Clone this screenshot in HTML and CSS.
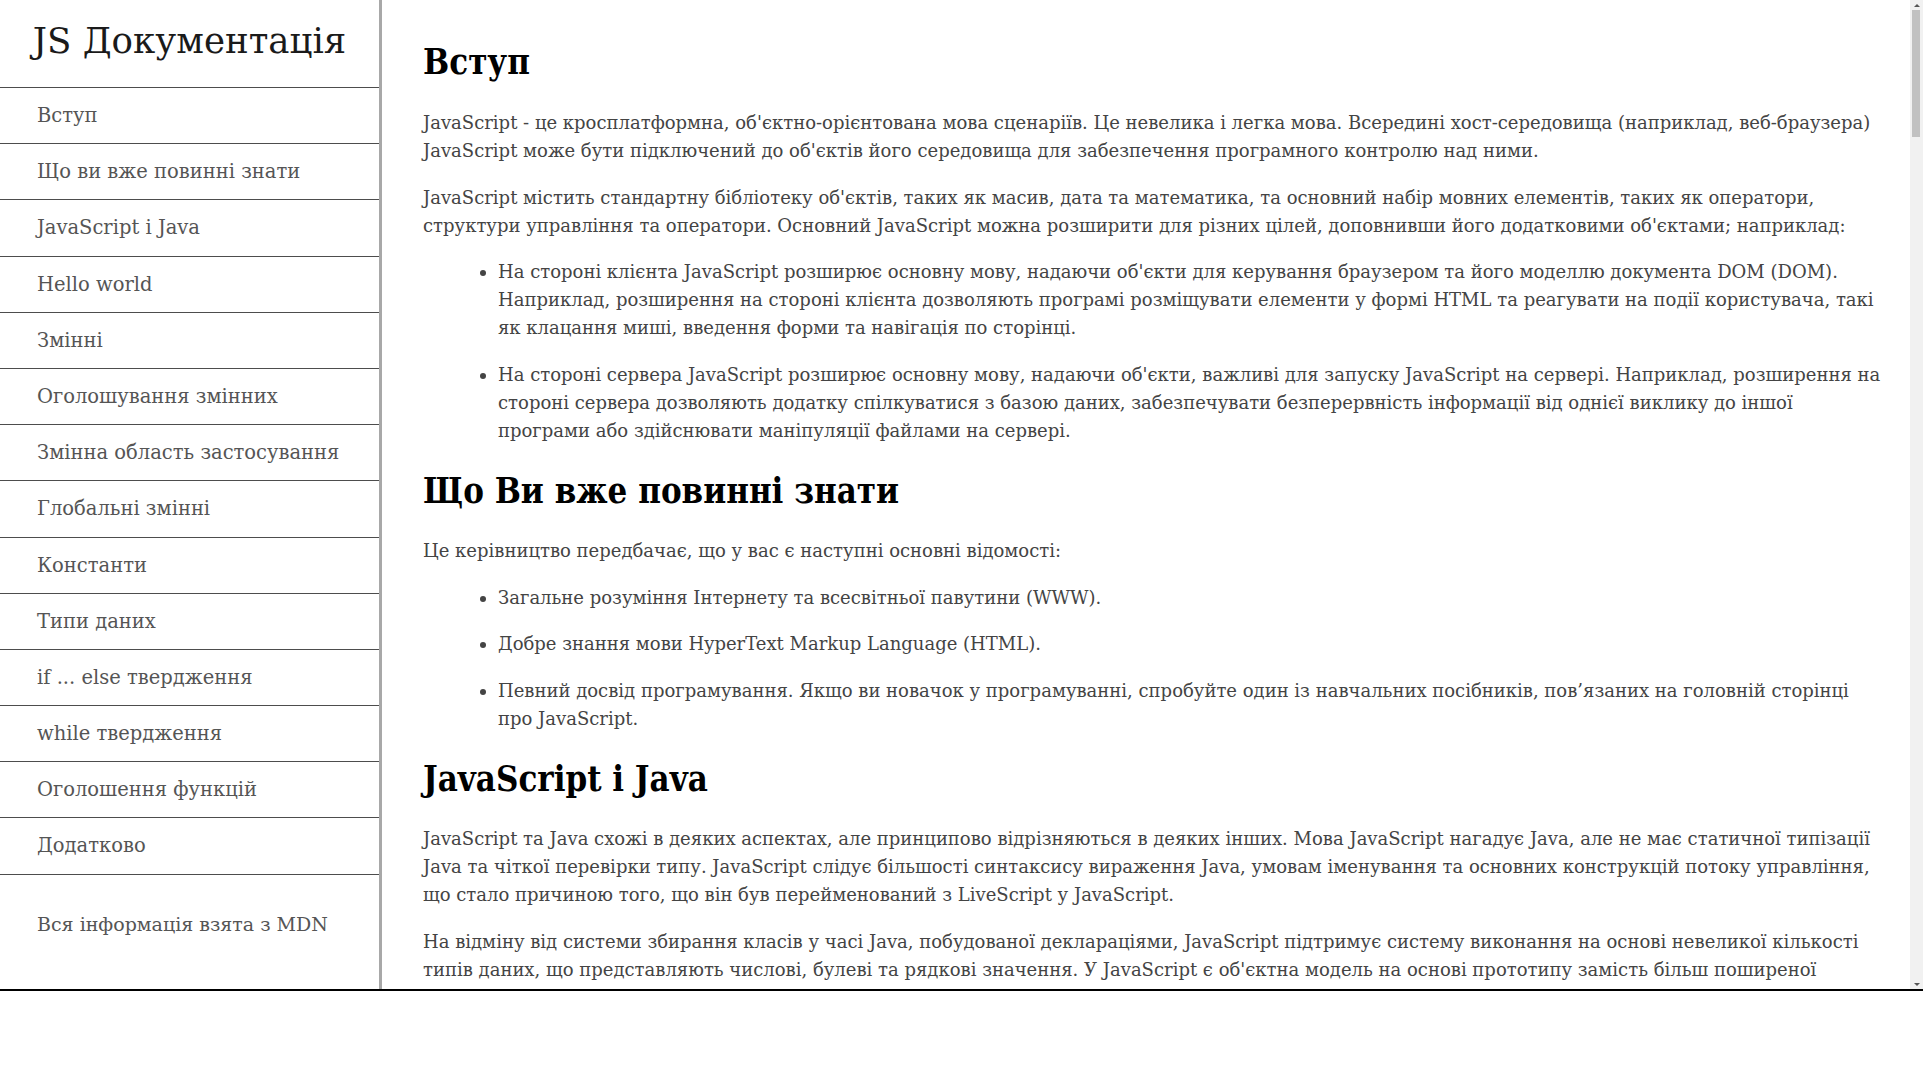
FILE: index.html
```html
<!DOCTYPE html>
<html lang="uk">
<head>
<meta charset="utf-8">
<title>JS Документація</title>
<link rel="stylesheet" href="styles.css">
</head>
<body>
<div class="page">
  <nav class="sidebar" id="navbar">
    <header class="brand">JS Документація</header>
    <ul class="nav-list">
      <li><a class="nav-link" href="#Вступ">Вступ</a></li>
      <li><a class="nav-link" href="#Що_ви_вже_повинні_знати">Що ви вже повинні знати</a></li>
      <li><a class="nav-link" href="#JavaScript_і_Java">JavaScript і Java</a></li>
      <li><a class="nav-link" href="#Hello_world">Hello world</a></li>
      <li><a class="nav-link" href="#Змінні">Змінні</a></li>
      <li><a class="nav-link" href="#Оголошування_змінних">Оголошування змінних</a></li>
      <li><a class="nav-link" href="#Змінна_область">Змінна область застосування</a></li>
      <li><a class="nav-link" href="#Глобальні_змінні">Глобальні змінні</a></li>
      <li><a class="nav-link" href="#Константи">Константи</a></li>
      <li><a class="nav-link" href="#Типи_даних">Типи даних</a></li>
      <li><a class="nav-link" href="#if_else">if ... else твердження</a></li>
      <li><a class="nav-link" href="#while">while твердження</a></li>
      <li><a class="nav-link" href="#Оголошення_функцій">Оголошення функцій</a></li>
      <li><a class="nav-link" href="#Додатково">Додатково</a></li>
    </ul>
    <div class="credit">Вся інформація взята з MDN</div>
  </nav>
  <main class="content" id="main-doc">
    <section class="main-section" id="Вступ">
      <h2 class="sec-title">Вступ</h2>
      <p>JavaScript - це кросплатформна, об'єктно-орієнтована мова сценаріїв. Це невелика і легка мова. Всередині хост-середовища (наприклад, веб-браузера) JavaScript може бути підключений до об'єктів його середовища для забезпечення програмного контролю над ними.</p>
      <p>JavaScript містить стандартну бібліотеку об'єктів, таких як масив, дата та математика, та основний набір мовних елементів, таких як оператори, структури управління та оператори. Основний JavaScript можна розширити для різних цілей, доповнивши його додатковими об'єктами; наприклад:</p>
      <ul class="doc-list">
        <li>На стороні клієнта JavaScript розширює основну мову, надаючи об'єкти для керування браузером та його моделлю документа DOM (DOM). Наприклад, розширення на стороні клієнта дозволяють програмі розміщувати елементи у формі HTML та реагувати на події користувача, такі як клацання миші, введення форми та навігація по сторінці.</li>
        <li>На стороні сервера JavaScript розширює основну мову, надаючи об'єкти, важливі для запуску JavaScript на сервері. Наприклад, розширення на стороні сервера дозволяють додатку спілкуватися з базою даних, забезпечувати безперервність інформації від однієї виклику до іншої програми або здійснювати маніпуляції файлами на сервері.</li>
      </ul>
    </section>
    <section class="main-section" id="Що_ви_вже_повинні_знати">
      <h2 class="sec-title">Що Ви вже повинні знати</h2>
      <p>Це керівництво передбачає, що у вас є наступні основні відомості:</p>
      <ul class="doc-list">
        <li>Загальне розуміння Інтернету та всесвітньої павутини (WWW).</li>
        <li>Добре знання мови HyperText Markup Language (HTML).</li>
        <li>Певний досвід програмування. Якщо ви новачок у програмуванні, спробуйте один із навчальних посібників, пов’язаних на головній сторінці про JavaScript.</li>
      </ul>
    </section>
    <section class="main-section" id="JavaScript_і_Java">
      <h2 class="sec-title">JavaScript і Java</h2>
      <p>JavaScript та Java схожі в деяких аспектах, але принципово відрізняються в деяких інших. Мова JavaScript нагадує Java, але не має статичної типізації Java та чіткої перевірки типу. JavaScript слідує більшості синтаксису вираження Java, умовам іменування та основних конструкцій потоку управління, що стало причиною того, що він був перейменований з LiveScript у JavaScript.</p>
      <p>На відміну від системи збирання класів у часі Java, побудованої деклараціями, JavaScript підтримує систему виконання на основі невеликої кількості типів даних, що представляють числові, булеві та рядкові значення. У JavaScript є об'єктна модель на основі прототипу замість більш поширеної об'єктної моделі на основі класів. Модель на основі прототипу забезпечує динамічне успадкування; тобто те, що успадковується, може відрізнятися для окремих об'єктів.</p>
    </section>
    <section class="main-section" id="Hello_world">
      <h2 class="sec-title">Hello world</h2>
      <p>Щоб почати писати JavaScript, відкрийте Scratchpad і напишіть свій перший JavaScript-код "Hello world".</p>
    </section>
    <section class="main-section" id="Змінні">
      <h2 class="sec-title">Змінні</h2>
      <p>Ви використовуєте змінні як символічні імена для значень у вашій програмі. Назви змінних, які називаються ідентифікаторами, відповідають певним правилам.</p>
    </section>
    <section class="main-section" id="Оголошування_змінних">
      <h2 class="sec-title">Оголошування змінних</h2>
      <p>Ви можете оголосити змінну трьома способами: за допомогою ключового слова var, let або const.</p>
    </section>
    <section class="main-section" id="Змінна_область">
      <h2 class="sec-title">Змінна область застосування</h2>
      <p>Коли ви оголошуєте змінну поза будь-якою функцією, вона називається глобальною змінною, оскільки вона доступна для будь-якого іншого коду в поточному документі.</p>
    </section>
    <section class="main-section" id="Глобальні_змінні">
      <h2 class="sec-title">Глобальні змінні</h2>
      <p>Глобальні змінні насправді є властивостями глобального об'єкта. На веб-сторінках глобальним об'єктом є window.</p>
    </section>
    <section class="main-section" id="Константи">
      <h2 class="sec-title">Константи</h2>
      <p>Ви можете створити іменовану константу тільки для читання за допомогою ключового слова const.</p>
    </section>
    <section class="main-section" id="Типи_даних">
      <h2 class="sec-title">Типи даних</h2>
      <p>Останній стандарт ECMAScript визначає сім типів даних.</p>
    </section>
    <section class="main-section" id="if_else">
      <h2 class="sec-title">if ... else твердження</h2>
      <p>Використовуйте оператор if для виконання оператора, якщо логічна умова є істинною.</p>
    </section>
    <section class="main-section" id="while">
      <h2 class="sec-title">while твердження</h2>
      <p>Оператор while виконує свої оператори, поки вказана умова оцінюється як true.</p>
    </section>
    <section class="main-section" id="Оголошення_функцій">
      <h2 class="sec-title">Оголошення функцій</h2>
      <p>Визначення функції складається з ключового слова function, а потім імені функції, списку параметрів та операторів JavaScript, що визначають функцію.</p>
    </section>
    <section class="main-section" id="Додатково">
      <h2 class="sec-title">Додатково</h2>
      <p>Вся документація в цьому посібнику взята з MDN.</p>
    </section>
  </main>
  <div class="scrollbar" aria-hidden="true">
    <div class="sb-btn"><span class="sb-arrow-up"></span></div>
    <div class="sb-track"><div class="sb-thumb"></div></div>
    <div class="sb-btn"><span class="sb-arrow-down"></span></div>
  </div>
</div>
</body>
</html>
```
FILE: styles.css
```css
* { box-sizing: border-box; }

html, body {
  margin: 0;
  padding: 0;
  background: #fff;
}

body {
  font-family: "DejaVu Serif", serif;
  color: #444;
}

.page {
  display: flex;
  height: 991px;
  border-bottom: 2px solid #000;
}

/* Sidebar */
.sidebar {
  flex: 0 0 382px;
  border-right: 3px solid #a8a8a8;
  display: flex;
  flex-direction: column;
}

.brand {
  height: 88px;
  border-bottom: 1px solid #4d4d4d;
  text-align: center;
  font-size: 35.6px;
  line-height: 82px;
  color: #1a1a1a;
}

.nav-list {
  list-style: none;
  margin: 0;
  padding: 0;
}

.nav-link {
  display: block;
  height: 56.2px;
  line-height: 55px;
  padding-left: 37px;
  border-bottom: 1px solid #4d4d4d;
  font-size: 19.5px;
  color: #555;
  text-decoration: none;
}

.credit {
  padding: 35px 0 0 37px;
  font-size: 19px;
  line-height: 28px;
  color: #555;
}

/* Main document */
.content {
  flex: 1 1 auto;
  overflow-y: auto;
  scrollbar-width: none;
  padding: 15px 27px 0 41px;
  font-size: 18px;
  line-height: 28px;
}

.sec-title {
  font-family: "DejaVu Serif Condensed", "DejaVu Serif", serif;
  font-stretch: condensed;
  font-size: 34.5px;
  line-height: 44px;
  font-weight: bold;
  color: #000;
  margin: 24px 0 24px;
}

.main-section:first-child .sec-title {
  margin-top: 25px;
  margin-bottom: 25px;
}

.content p {
  margin: 0 0 18.7px;
}

.doc-list {
  margin: 0 0 18.7px;
  padding-left: 75px;
}

.doc-list li {
  margin-bottom: 18.7px;
}

/* Decorative scrollbar */
.scrollbar {
  flex: 0 0 13px;
  background: #f1f1f1;
  display: flex;
  flex-direction: column;
}

.sb-btn {
  height: 10px;
  display: flex;
  align-items: center;
  justify-content: center;
}

.sb-arrow-up,
.sb-arrow-down {
  width: 0;
  height: 0;
  border-left: 3px solid transparent;
  border-right: 3px solid transparent;
}

.sb-arrow-up { border-bottom: 3px solid #555; }
.sb-arrow-down { border-top: 3px solid #555; }

.sb-track {
  flex: 1 1 auto;
  padding: 0 3px 0 2px;
}

.sb-thumb {
  height: 127px;
  background: #c1c1c1;
}
```
